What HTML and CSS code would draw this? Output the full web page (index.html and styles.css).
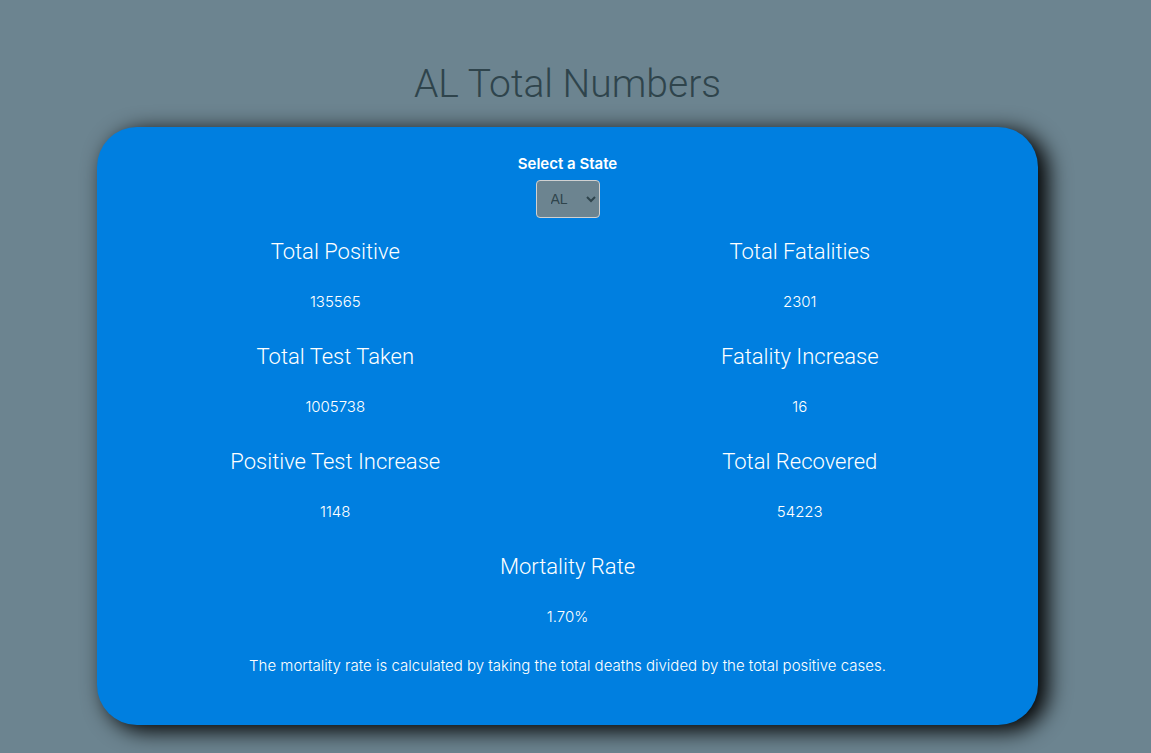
FILE: index.html
```html
<!DOCTYPE html>
<html lang="en">
<head>
<meta charset="utf-8">
<meta name="viewport" content="width=device-width, initial-scale=1">
<title>AL Total Numbers</title>
<link rel="stylesheet" href="styles.css">
</head>
<body>
<main class="page">
  <h1 class="title">AL Total Numbers</h1>
  <section class="card">
    <form class="picker">
      <label class="picker-label" for="state">Select a State</label>
      <select class="picker-select" id="state">
        <option selected>AL</option>
        <option>AK</option>
        <option>AZ</option>
      </select>
    </form>
    <div class="stats">
      <div class="stat"><h2 class="stat-name">Total Positive</h2><p class="stat-value">135565</p></div>
      <div class="stat"><h2 class="stat-name">Total Fatalities</h2><p class="stat-value">2301</p></div>
      <div class="stat"><h2 class="stat-name">Total Test Taken</h2><p class="stat-value">1005738</p></div>
      <div class="stat"><h2 class="stat-name">Fatality Increase</h2><p class="stat-value">16</p></div>
      <div class="stat"><h2 class="stat-name">Positive Test Increase</h2><p class="stat-value">1148</p></div>
      <div class="stat"><h2 class="stat-name">Total Recovered</h2><p class="stat-value">54223</p></div>
      <div class="stat stat-wide"><h2 class="stat-name">Mortality Rate</h2><p class="stat-value">1.70%</p></div>
    </div>
    <p class="note">The mortality rate is calculated by taking the total deaths divided by the total positive cases.</p>
  </section>
</main>
</body>
</html>
```
FILE: styles.css
```css
* {
  box-sizing: border-box;
}

body {
  margin: 0;
  background: #6c8490;
  color: #fff;
  font-family: Inter, "Liberation Sans", sans-serif;
  font-size: 15px;
  line-height: 24px;
}

h1, h2, p {
  margin: 0;
}

.page {
  padding: 60px 113px 28px 97px;
  text-align: center;
}

.title {
  margin-bottom: 18px;
  color: #2f444c;
  font-family: Roboto, "Liberation Sans", sans-serif;
  font-size: 39px;
  font-weight: 300;
  line-height: 49px;
}

.card {
  padding: 25px 24px 47px;
  border-radius: 40px;
  background: #007fe0;
  box-shadow: 9px 5px 22px 1px #000;
}

.picker {
  display: flex;
  flex-direction: column;
  align-items: center;
  gap: 4px;
}

.picker-label {
  font-weight: 600;
}

.picker-select {
  height: 38px;
  width: 64px;
  padding: 6px 10px;
  border: 1px solid #d1d1d1;
  border-radius: 4px;
  background: #6c8490;
  color: #2f444c;
  font-family: "Liberation Sans", Arial, sans-serif;
  font-size: 14px;
}

.stats {
  display: grid;
  grid-template-columns: 1fr 1fr;
  column-gap: 36px;
  row-gap: 25px;
  margin-top: 16px;
}

.stat-wide {
  grid-column: 1 / -1;
}

.stat-name {
  margin-bottom: 20px;
  font-family: Roboto, "Liberation Sans", sans-serif;
  font-size: 22px;
  font-weight: 300;
  line-height: 36px;
}

.stat-value,
.note {
  font-weight: 300;
}

.note {
  margin-top: 25px;
}
```
